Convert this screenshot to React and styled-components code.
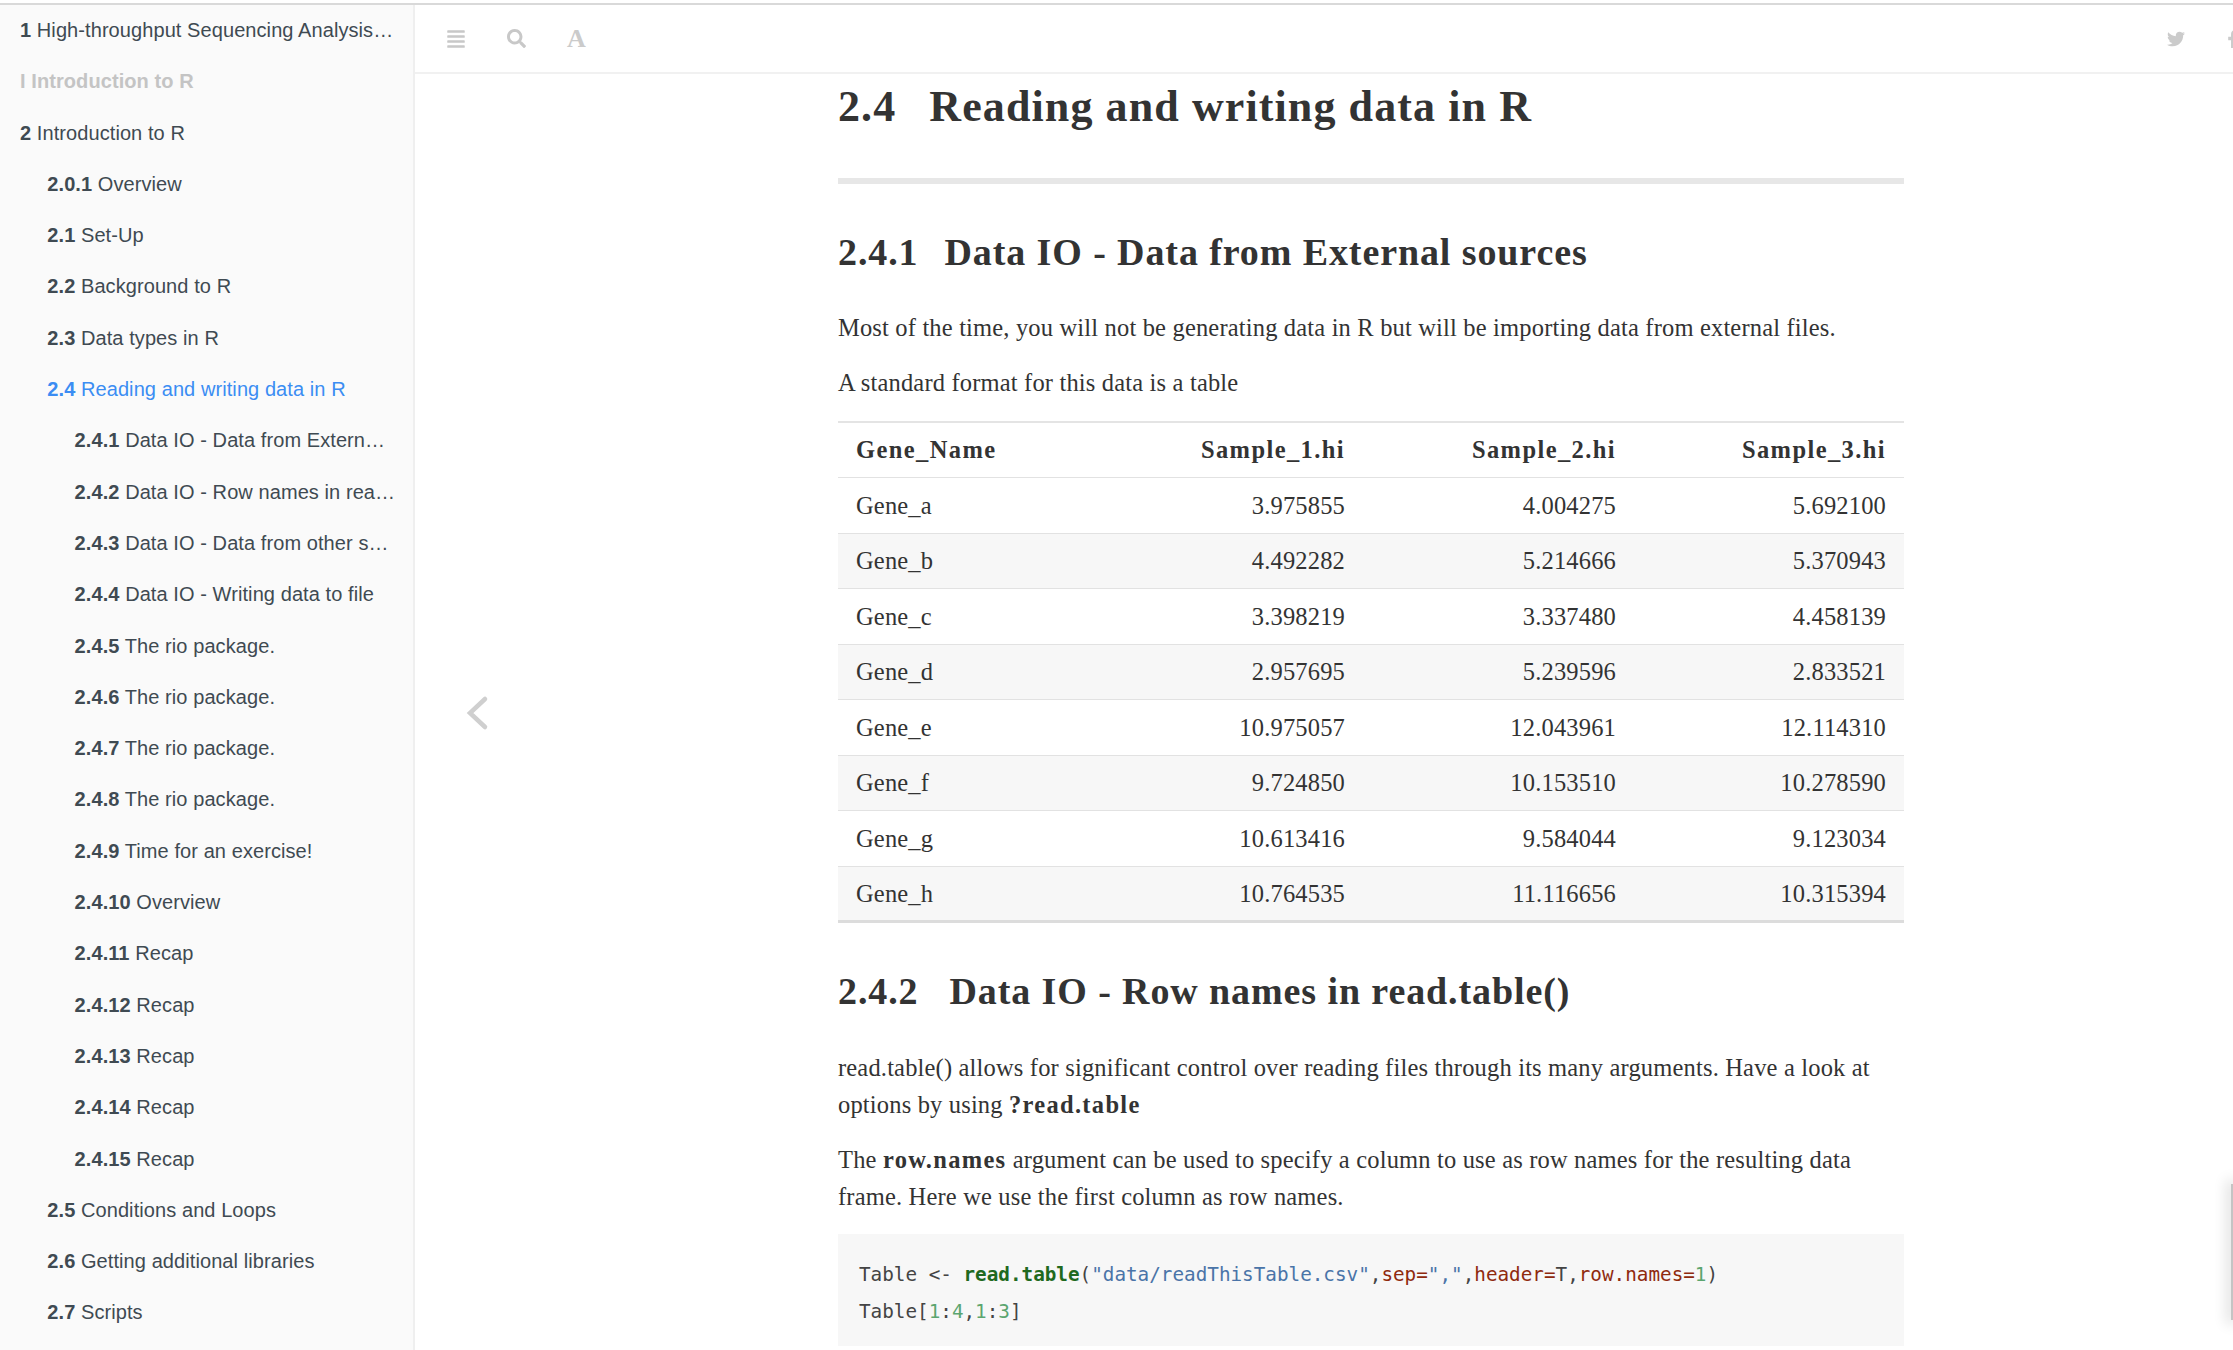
import React from "react";
import styled, { createGlobalStyle } from "styled-components";
import { FaAlignJustify, FaSearch, FaTwitter, FaFacebookF } from "react-icons/fa";

const Global = createGlobalStyle`
  html, body { margin: 0; padding: 0; background: #fff; height: 100%; overflow: hidden; }
  #root { height: 100%; }
`;

const Page = styled.div`
  position: relative;
  width: 2233px;
  height: 1350px;
  overflow: hidden;
  padding-top: 3px;
  box-sizing: border-box;
  display: flex;
  flex-direction: column;
  background: #fff;
`;
const Shell = styled.div`
  flex: 1;
  min-height: 0;
  display: flex;
  border-top: 2px solid #d9d9d9;
`;
const Sidebar = styled.nav`
  width: 413px;
  flex: none;
  box-sizing: content-box;
  background: #fafafa;
  border-right: 2px solid #efefef;
  overflow: hidden;
`;
const SideList = styled.ul`
  list-style: none;
  margin: 0;
  padding: 0;
`;
const SideItem = styled.li`
  height: 51.3px;
  padding-left: ${(p) => 20 + p.$level * 27.3}px;
  padding-right: 17px;
  box-sizing: border-box;
  font: 20px/51.8px "Liberation Sans", Arial, sans-serif;
  letter-spacing: 0.08px;
  color: ${(p) => (p.$active ? "#3b8df3" : p.$part ? "#c4c4c4" : "#3f4a52")};
  font-weight: ${(p) => (p.$part ? 700 : 400)};
  white-space: nowrap;
  overflow: hidden;
  text-overflow: ellipsis;
  b { font-weight: 700; }
`;
const Main = styled.main`
  flex: 1;
  min-width: 0;
  display: flex;
  flex-direction: column;
  position: relative;
`;
const Toolbar = styled.header`
  height: 69px;
  flex: none;
  box-sizing: border-box;
  border-bottom: 2px solid #f1f1f1;
  display: flex;
  align-items: center;
  padding: 0 0 0 31px;
  color: #c8c8c8;
`;
const ToolIcon = styled.span`
  display: inline-flex;
  width: ${(p) => p.$w || 60}px;
  font-size: ${(p) => p.$size || 19}px;
  flex: none;
`;
const FontGlyph = styled.span`
  font: 700 26px/26px "Liberation Serif", serif;
  color: #cbcbcb;
`;
const ToolRight = styled.div`
  margin-left: auto;
  display: flex;
  align-items: center;
  margin-right: -6px;
  gap: 42px;
  color: #cbcbcb;
`;
const Content = styled.article`
  flex: 1;
  min-height: 0;
  padding-left: 423px;
  width: 1066px;
  font-family: "Liberation Serif", "Times New Roman", serif;
  color: #333;
  font-size: 24.5px;
  letter-spacing: 0.17px;
  b { letter-spacing: 1.3px; }
`;
const H2 = styled.h2`
  margin: 0;
  padding: 8px 0 0;
  height: 96px;
  box-sizing: content-box;
  font-size: 44px;
  line-height: 50px;
  font-weight: 700;
  letter-spacing: 1.1px;
  color: #333;
`;
const H3 = styled.h3`
  margin: 0;
  font-size: 38px;
  line-height: 44px;
  font-weight: 700;
  letter-spacing: 0.9px;
  color: #333;
`;
const Num = styled.span`
  margin-right: ${(p) => p.$gap || 26}px;
`;
const Rule = styled.hr`
  border: 0;
  margin: 0 0 46px;
  height: 6px;
  background: #e7e7e7;
`;
const Para = styled.p`
  margin: ${(p) => p.$before ?? 0}px 0 ${(p) => p.$after ?? 18}px;
  line-height: 37px;
`;
const Table = styled.table`
  width: 1066px;
  table-layout: fixed;
  border-collapse: collapse;
  border-top: 2px solid #e4e4e4;
  border-bottom: 3px solid #dcdcdc;
  margin: 0 0 46px;
`;
const Row = styled.tr`
  height: 55.5px;
  background: ${(p) => (p.$even ? "#f7f7f7" : "#fff")};
  border-top: ${(p) => (p.$first ? 0 : "1.5px solid #e2e2e2")};
`;
const Th = styled.th`
  padding: 0 18px;
  text-align: ${(p) => (p.$left ? "left" : "right")};
  font-weight: 700;
  letter-spacing: 1.4px;
`;
const Td = styled.td`
  padding: 1px 18px 0;
  text-align: ${(p) => (p.$left ? "left" : "right")};
`;
const Code = styled.pre`
  margin: 19px 0 0;
  height: 112px;
  box-sizing: border-box;
  padding: 22px 21px 0;
  background: #f7f7f7;
  font: 19.3px/37px "DejaVu Sans Mono", monospace;
  letter-spacing: 0;
  color: #444;
`;
const Fn = styled.span`
  color: #1f6a1f;
  font-weight: 700;
`;
const Str = styled.span`
  color: #4a74a8;
`;
const Arg = styled.span`
  color: #8f2a0e;
`;
const Lit = styled.span`
  color: #5ba56f;
`;
const PrevArrow = styled.svg`
  position: absolute;
  left: 50px;
  top: 688px;
`;
const EdgeTab = styled.div`
  position: absolute;
  right: 0;
  top: 1184px;
  width: 2px;
  height: 136px;
  background: #c4c4c4;
  box-shadow: 0 0 14px 4px rgba(0, 0, 0, 0.14);
`;

const side = [
  { n: "1", t: "High-throughput Sequencing Analysis with R", l: 0 },
  { n: "I", t: "Introduction to R", l: 0, part: true },
  { n: "2", t: "Introduction to R", l: 0 },
  { n: "2.0.1", t: "Overview", l: 1 },
  { n: "2.1", t: "Set-Up", l: 1 },
  { n: "2.2", t: "Background to R", l: 1 },
  { n: "2.3", t: "Data types in R", l: 1 },
  { n: "2.4", t: "Reading and writing data in R", l: 1, active: true },
  { n: "2.4.1", t: "Data IO - Data from External sources", l: 2 },
  { n: "2.4.2", t: "Data IO - Row names in read.table()", l: 2 },
  { n: "2.4.3", t: "Data IO - Data from other sources", l: 2 },
  { n: "2.4.4", t: "Data IO - Writing data to file", l: 2 },
  { n: "2.4.5", t: "The rio package.", l: 2 },
  { n: "2.4.6", t: "The rio package.", l: 2 },
  { n: "2.4.7", t: "The rio package.", l: 2 },
  { n: "2.4.8", t: "The rio package.", l: 2 },
  { n: "2.4.9", t: "Time for an exercise!", l: 2 },
  { n: "2.4.10", t: "Overview", l: 2 },
  { n: "2.4.11", t: "Recap", l: 2 },
  { n: "2.4.12", t: "Recap", l: 2 },
  { n: "2.4.13", t: "Recap", l: 2 },
  { n: "2.4.14", t: "Recap", l: 2 },
  { n: "2.4.15", t: "Recap", l: 2 },
  { n: "2.5", t: "Conditions and Loops", l: 1 },
  { n: "2.6", t: "Getting additional libraries", l: 1 },
  { n: "2.7", t: "Scripts", l: 1 },
];

const rows = [
  ["Gene_a", "3.975855", "4.004275", "5.692100"],
  ["Gene_b", "4.492282", "5.214666", "5.370943"],
  ["Gene_c", "3.398219", "3.337480", "4.458139"],
  ["Gene_d", "2.957695", "5.239596", "2.833521"],
  ["Gene_e", "10.975057", "12.043961", "12.114310"],
  ["Gene_f", "9.724850", "10.153510", "10.278590"],
  ["Gene_g", "10.613416", "9.584044", "9.123034"],
  ["Gene_h", "10.764535", "11.116656", "10.315394"],
];

export default function App() {
  return (
    <Page>
      <Global />
      <Shell>
        <Sidebar>
          <SideList>
            {side.map((s, i) => (
              <SideItem key={i} $level={s.l} $active={s.active} $part={s.part}>
                <b>{s.n}</b> {s.t}
              </SideItem>
            ))}
          </SideList>
        </Sidebar>
        <Main>
          <Toolbar>
            <ToolIcon $w={61} $size={20}><FaAlignJustify /></ToolIcon>
            <ToolIcon $w={60} $size={19}><FaSearch /></ToolIcon>
            <ToolIcon $w={60}><FontGlyph>A</FontGlyph></ToolIcon>
            <ToolRight>
              <ToolIcon $w={18} $size={18}><FaTwitter /></ToolIcon>
              <ToolIcon $w={12} $size={18}><FaFacebookF /></ToolIcon>
            </ToolRight>
          </Toolbar>
          <PrevArrow width="24" height="40" viewBox="0 0 24 40" fill="none">
            <polyline points="20,6 5,20 20,34" stroke="#cfcfcf" strokeWidth="4.5" strokeLinecap="round" strokeLinejoin="miter" />
          </PrevArrow>
          <Content>
            <H2><Num $gap={33}>2.4</Num>Reading and writing data in R</H2>
            <Rule />
            <H3><Num>2.4.1</Num>Data IO - Data from External sources</H3>
            <Para $before={35}>Most of the time, you will not be generating data in R but will be importing data from external files.</Para>
            <Para $after={20}>A standard format for this data is a table</Para>
            <Table>
              <colgroup>
                <col width="255" />
                <col width="270" />
                <col width="271" />
                <col width="270" />
              </colgroup>
              <thead>
                <Row $first>
                  <Th $left>Gene_Name</Th>
                  <Th>Sample_1.hi</Th>
                  <Th>Sample_2.hi</Th>
                  <Th>Sample_3.hi</Th>
                </Row>
              </thead>
              <tbody>
                {rows.map((r, i) => (
                  <Row key={r[0]} $even={i % 2 === 1}>
                    <Td $left>{r[0]}</Td>
                    <Td>{r[1]}</Td>
                    <Td>{r[2]}</Td>
                    <Td>{r[3]}</Td>
                  </Row>
                ))}
              </tbody>
            </Table>
            <H3><Num $gap={31}>2.4.2</Num>Data IO - Row names in read.table()</H3>
            <Para $before={36}>read.table() allows for significant control over reading files through its many arguments. Have a look at options by using <b>?read.table</b></Para>
            <Para>The <b>row.names</b> argument can be used to specify a column to use as row names for the resulting data frame. Here we use the first column as row names.</Para>
            <Code>Table &lt;- <Fn>read.table</Fn>(<Str>"data/readThisTable.csv"</Str>,<Arg>sep=</Arg><Str>","</Str>,<Arg>header=</Arg>T,<Arg>row.names=</Arg><Lit>1</Lit>){"\n"}Table[<Lit>1</Lit>:<Lit>4</Lit>,<Lit>1</Lit>:<Lit>3</Lit>]</Code>
          </Content>
        </Main>
      </Shell>
      <EdgeTab />
    </Page>
  );
}
